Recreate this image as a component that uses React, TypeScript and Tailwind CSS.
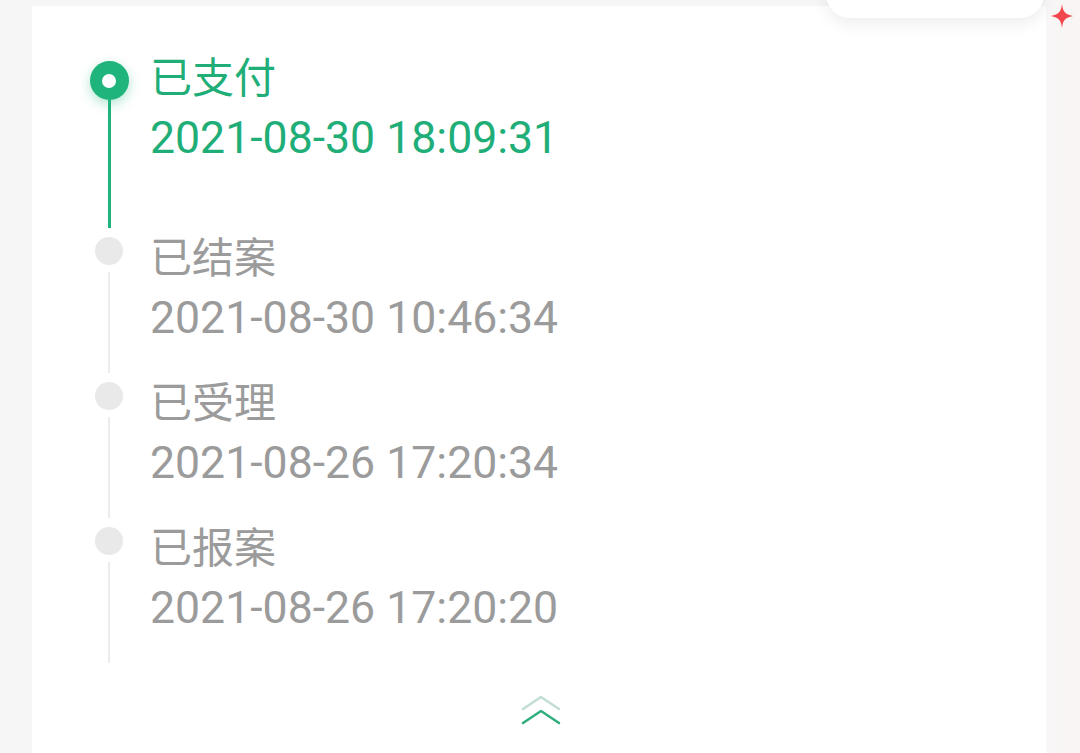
import React from "react";

type Step = {
  title: string;
  time: string;
  active?: boolean;
};

const steps: Step[] = [
  { title: "已支付", time: "2021-08-30 18:09:31", active: true },
  { title: "已结案", time: "2021-08-30 10:46:34" },
  { title: "已受理", time: "2021-08-26 17:20:34" },
  { title: "已报案", time: "2021-08-26 17:20:20" },
];

function TimelineItem({ step }: { step: Step }) {
  const active = !!step.active;
  return (
    <div className="flex">
      {/* dot + line */}
      <div className="flex w-[38px] shrink-0 flex-col items-center">
        {active ? (
          <>
            <div className="mt-[10px] flex size-[39px] shrink-0 items-center justify-center rounded-full bg-[#1fb47c] shadow-[0_4px_12px_rgba(31,180,124,0.35)]">
              <div className="size-[14px] rounded-full bg-white" />
            </div>
            <div className="mb-[3px] w-[3px] flex-1 bg-[#1fb47c]" />
          </>
        ) : (
          <>
            <div className="mt-[6px] size-[28px] shrink-0 rounded-full bg-[#e9e9e9]" />
            <div className="mt-[7px] mb-[3px] w-[2px] flex-1 bg-[#ececec]" />
          </>
        )}
      </div>

      {/* text */}
      <div
        className={`ml-[22px] flex flex-col ${
          active ? "pb-[65px] text-[#1fae78]" : "pb-[30px] text-[#9b9b9b]"
        }`}
      >
        <div className="text-[42px] leading-[56px]">{step.title}</div>
        <div className="mt-[3px] text-[44.6px] leading-[56px]">{step.time}</div>
      </div>
    </div>
  );
}

export default function App() {
  return (
    <div
      className="relative h-[753px] w-[1080px] overflow-hidden bg-[#f6f6f6]"
      style={{ fontFamily: 'Roboto, "Noto Sans CJK SC", sans-serif' }}
    >
      {/* right-edge faint pink tint */}
      <div className="absolute inset-y-0 right-0 w-[40px] bg-gradient-to-r from-[#f8f7f7] to-[#faf4f4]" />

      <div className="relative ml-[32px] mt-[6px] flex h-[747px] w-[1014px] flex-col bg-white">
        <div className="flex flex-col pl-[58px] pt-[45px]">
          {steps.map((s) => (
            <TimelineItem key={s.title} step={s} />
          ))}
        </div>

        {/* collapse chevron */}
        <div className="mt-[28px] flex justify-center pl-[4px]">
          <svg width="40" height="34" viewBox="0 0 40 34" fill="none">
            <path d="M2 15 L20 3 L38 15" stroke="#c3ddd2" strokeWidth="2.5" strokeLinecap="round" strokeLinejoin="round" />
            <path d="M2 29 L20 17 L38 29" stroke="#2fae7e" strokeWidth="2.5" strokeLinecap="round" strokeLinejoin="round" />
          </svg>
        </div>
      </div>

      {/* overlapping popup edge at top right */}
      <div className="absolute right-[36px] top-[-30px] h-[48px] w-[218px] rounded-b-[24px] bg-white shadow-[0_6px_16px_rgba(0,0,0,0.07)]" />

      {/* red sparkle */}
      <svg className="absolute left-[1051px] top-[4px]" width="22" height="24" viewBox="0 0 22 24">
        <path d="M11 0 C12 8 14 10 22 12 C14 14 12 16 11 24 C10 16 8 14 0 12 C8 10 10 8 11 0 Z" fill="#f2464d" />
      </svg>
    </div>
  );
}
